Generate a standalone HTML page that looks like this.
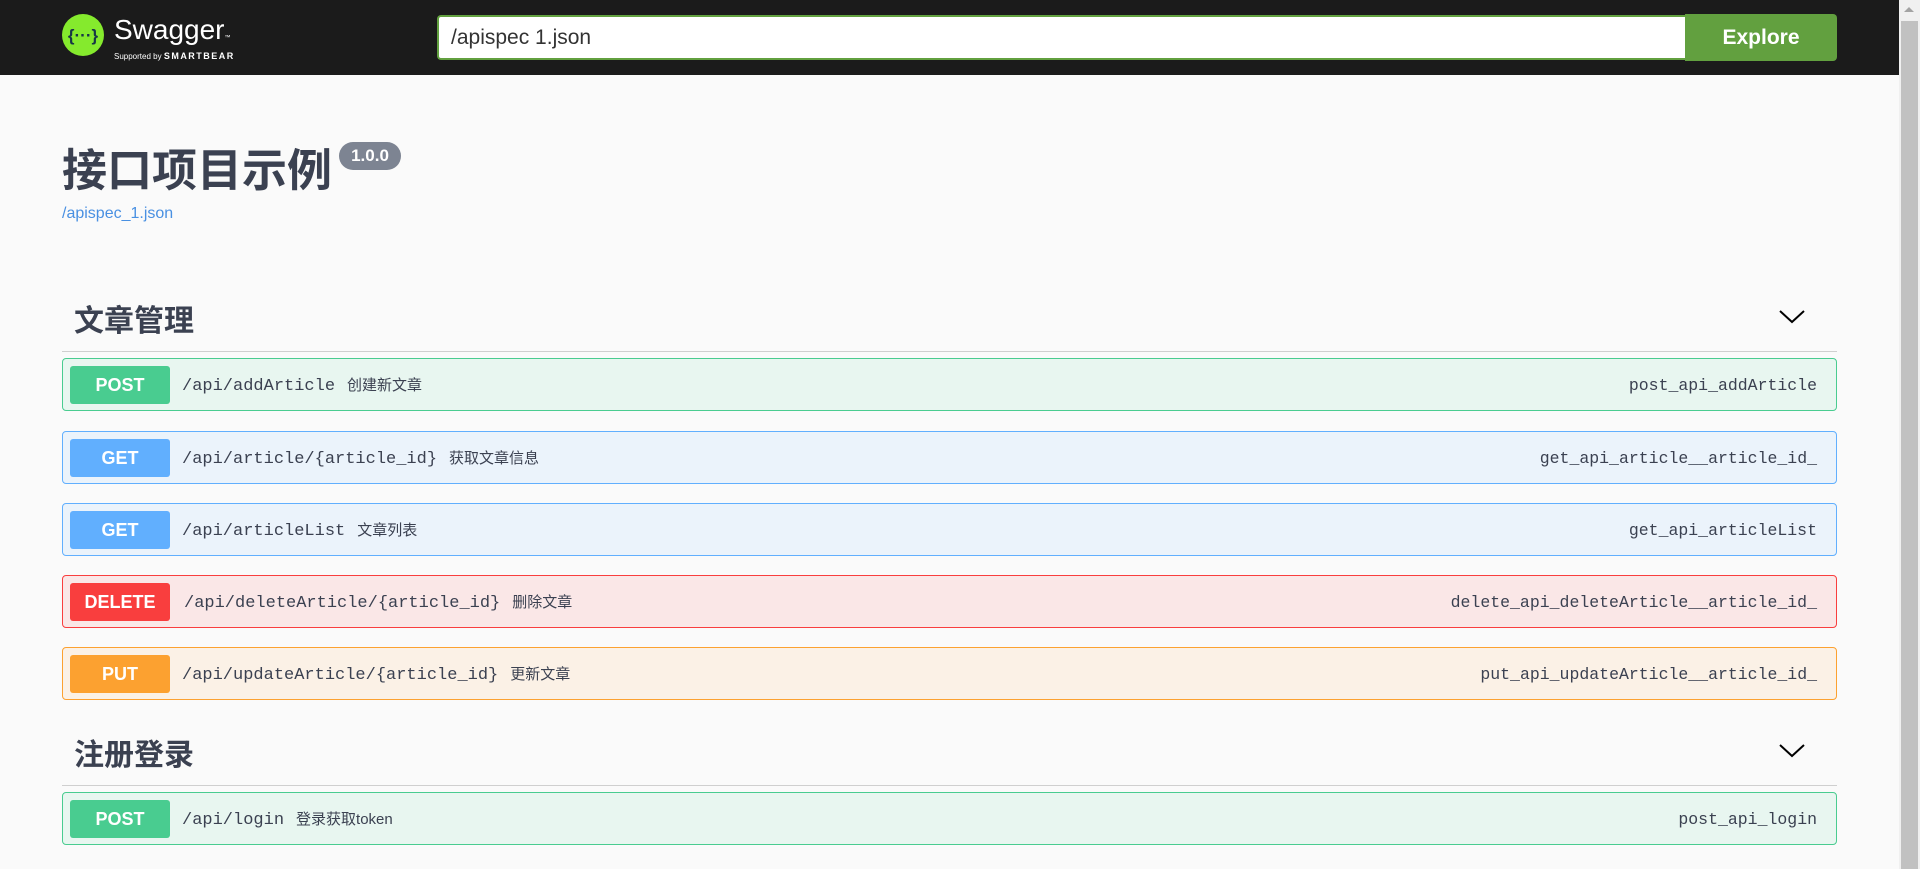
<!DOCTYPE html>
<html><head><meta charset="utf-8"><style>
*{margin:0;padding:0;box-sizing:border-box}
body{width:1920px;height:869px;overflow:hidden;background:#fafafa;font-family:"Liberation Sans","Noto Sans CJK SC",sans-serif;position:relative}
.hdr{position:absolute;left:0;top:0;width:1899px;height:75px;background:#1b1b1b}
.sb{position:absolute;left:1899px;top:0;width:21px;height:869px;background:#f0f0f0}
.sb .th{position:absolute;left:2px;top:21px;width:17px;height:848px;background:#c1c1c1}
.sb .ar{position:absolute;left:5px;top:7px;width:0;height:0;border-left:5px solid transparent;border-right:5px solid transparent;border-bottom:5px solid #a3a3a3}
.abs{position:absolute}
.input{left:437px;top:15px;width:1250px;height:45px;background:#fff;border:2px solid #62a03f;border-right:none;border-radius:4px 0 0 4px;font-size:21px;color:#333;padding:10px 12px;line-height:22px}
.explore{left:1685px;top:14px;width:152px;height:47px;background:#62a03f;border-radius:0 4px 4px 0;color:#fff;font-weight:bold;font-size:21px;text-align:center;line-height:47px}
.title{left:62px;top:141px;font-size:45px;font-weight:bold;color:#3b4151;line-height:60px}
.ver{left:339px;top:142px;width:62px;height:28px;border-radius:14px;background:#7d8492;color:#fff;font-weight:bold;font-size:17px;text-align:center;line-height:28px}
.link{left:62px;top:205px;font-size:16px;color:#4990e2}
.sec{left:74px;font-size:30px;font-weight:bold;color:#3b4151;line-height:40px}
.line{left:62px;width:1775px;height:1px;background:#cfcfcf}
.chev{left:1778px}
.op{position:absolute;left:62px;width:1775px;height:53px;border:1px solid;border-radius:4px}
.op .m{position:absolute;left:7px;top:7px;width:100px;height:38px;border-radius:3px;color:#fff;font-weight:bold;font-size:18px;text-align:center;line-height:38px}
.op .p{position:absolute;left:119px;top:1px;line-height:51px;font-family:"Liberation Mono","Noto Sans CJK SC",monospace;font-size:17px;color:#3b4151;white-space:nowrap}
.op .p span{font-family:"Liberation Sans","Noto Sans CJK SC",sans-serif;font-size:15px;margin-left:12px}
.op .id{position:absolute;right:19px;top:1px;line-height:51px;font-family:"Liberation Mono",monospace;font-size:16.5px;color:#3b4151}
.post{background:#e8f6f0;border-color:#49cc90}.post .m{background:#49cc90}
.get{background:#ebf3fb;border-color:#61affe}.get .m{background:#61affe}
.del{background:#fae7e7;border-color:#f93e3e}.del .m{background:#f93e3e}
.put{background:#fbf1e6;border-color:#fca130}.put .m{background:#fca130}
</style></head><body>
<div class="hdr">
 <svg class="abs" style="left:62px;top:14px" width="42" height="42" viewBox="0 0 42 42"><circle cx="21" cy="21" r="21" fill="#85ea2d"/><text x="21" y="27" font-family="Liberation Sans" font-size="17" font-weight="bold" text-anchor="middle" fill="#173647">{···}</text></svg>
 <div class="abs" style="left:114px;top:14px;color:#fff;font-size:28px;line-height:32px">Swagger<span style="font-size:6px">™</span></div>
 <div class="abs" style="left:114px;top:51px;color:#fff;font-size:8px;line-height:10px">Supported by <b style="font-size:9px;letter-spacing:1.5px">SMARTBEAR</b></div>
</div>
<div class="abs input">/apispec 1.json</div>
<div class="abs explore">Explore</div>
<div class="sb"><div class="ar"></div><div class="th"></div></div>

<div class="abs title">接口项目示例</div>
<div class="abs ver">1.0.0</div>
<div class="abs link">/apispec_1.json</div>

<div class="abs sec" style="top:302px">文章管理</div>
<svg class="abs chev" style="top:308px" width="28" height="18" viewBox="0 0 28 18"><path d="M2 3 L14 14 L26 3" fill="none" stroke="#000" stroke-width="2"/></svg>
<div class="abs line" style="top:351px"></div>

<div class="op post" style="top:358px"><div class="m">POST</div><div class="p">/api/addArticle<span>创建新文章</span></div><div class="id">post_api_addArticle</div></div>
<div class="op get" style="top:431px"><div class="m">GET</div><div class="p">/api/article/{article_id}<span>获取文章信息</span></div><div class="id">get_api_article__article_id_</div></div>
<div class="op get" style="top:503px"><div class="m">GET</div><div class="p">/api/articleList<span>文章列表</span></div><div class="id">get_api_articleList</div></div>
<div class="op del" style="top:575px"><div class="m">DELETE</div><div class="p" style="left:121px">/api/deleteArticle/{article_id}<span>删除文章</span></div><div class="id">delete_api_deleteArticle__article_id_</div></div>
<div class="op put" style="top:647px"><div class="m">PUT</div><div class="p">/api/updateArticle/{article_id}<span>更新文章</span></div><div class="id">put_api_updateArticle__article_id_</div></div>

<div class="abs sec" style="top:736px">注册登录</div>
<svg class="abs chev" style="top:742px" width="28" height="18" viewBox="0 0 28 18"><path d="M2 3 L14 14 L26 3" fill="none" stroke="#000" stroke-width="2"/></svg>
<div class="abs line" style="top:785px"></div>
<div class="op post" style="top:792px"><div class="m">POST</div><div class="p">/api/login<span>登录获取token</span></div><div class="id">post_api_login</div></div>
</body></html>
